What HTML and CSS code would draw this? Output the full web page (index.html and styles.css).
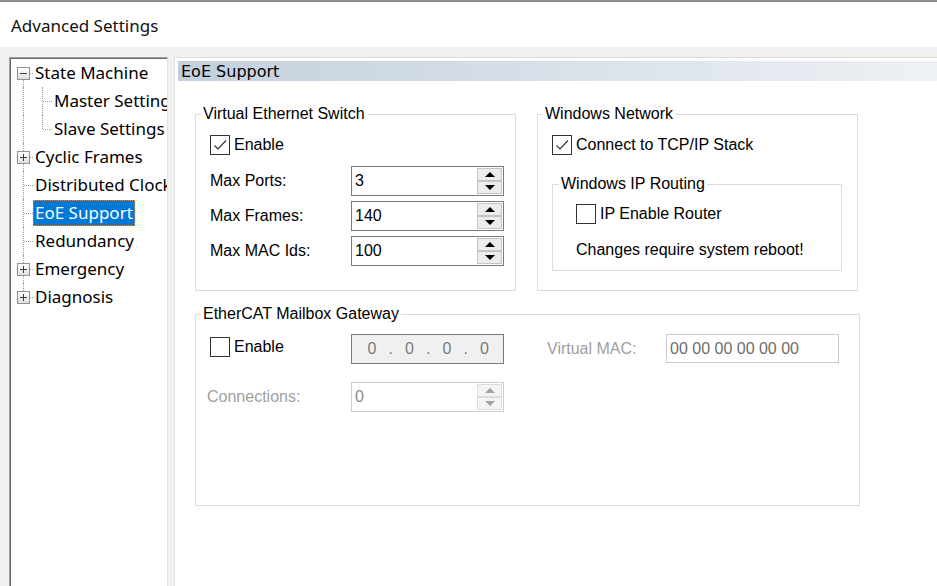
FILE: index.html
```html
<!DOCTYPE html>
<html>
<head>
<meta charset="utf-8">
<title>Advanced Settings</title>
<link rel="stylesheet" href="styles.css">
</head>
<body>
<header class="titlebar">Advanced Settings</header>
<div class="main">
  <nav class="tree">
    <div class="row"><span class="ln first"><i class="exp"></i></span><span class="lbl">State Machine</span></div>
    <div class="row"><span class="ln pass"></span><span class="ln sub"></span><span class="lbl">Master Settings</span></div>
    <div class="row"><span class="ln pass"></span><span class="ln sub last"></span><span class="lbl">Slave Settings</span></div>
    <div class="row"><span class="ln"><i class="exp plus"></i></span><span class="lbl">Cyclic Frames</span></div>
    <div class="row"><span class="ln"></span><span class="lbl">Distributed Clocks</span></div>
    <div class="row"><span class="ln"></span><span class="lbl sel">EoE Support</span></div>
    <div class="row"><span class="ln"></span><span class="lbl">Redundancy</span></div>
    <div class="row"><span class="ln"><i class="exp plus"></i></span><span class="lbl">Emergency</span></div>
    <div class="row"><span class="ln last"><i class="exp plus"></i></span><span class="lbl">Diagnosis</span></div>
  </nav>
  <section class="panel">
    <div class="hdr">EoE Support</div>
    <div class="content">
      <div class="top-row">
        <fieldset class="grp g-half">
          <legend>Virtual Ethernet Switch</legend>
          <div class="gbody">
            <label class="chk"><span class="box"><svg width="18" height="18" viewBox="0 0 18 18"><path d="M3.5 9.5 L7 13 L15 4.5" fill="none" stroke="#333" stroke-width="1.2"/></svg></span>Enable</label>
            <div class="field first-field"><span class="lab">Max Ports:</span><div class="spin"><span class="val">3</span><span class="btns"><span class="sb"><i class="up"></i></span><span class="sb"><i class="dn"></i></span></span></div></div>
            <div class="field"><span class="lab">Max Frames:</span><div class="spin"><span class="val">140</span><span class="btns"><span class="sb"><i class="up"></i></span><span class="sb"><i class="dn"></i></span></span></div></div>
            <div class="field"><span class="lab">Max MAC Ids:</span><div class="spin"><span class="val">100</span><span class="btns"><span class="sb"><i class="up"></i></span><span class="sb"><i class="dn"></i></span></span></div></div>
          </div>
        </fieldset>
        <fieldset class="grp g-half">
          <legend>Windows Network</legend>
          <div class="gbody">
            <label class="chk"><span class="box"><svg width="18" height="18" viewBox="0 0 18 18"><path d="M3.5 9.5 L7 13 L15 4.5" fill="none" stroke="#333" stroke-width="1.2"/></svg></span>Connect to TCP/IP Stack</label>
            <fieldset class="grp g-inner">
              <legend>Windows IP Routing</legend>
              <div class="ibody">
                <label class="chk"><span class="box"></span>IP Enable Router</label>
                <p class="note">Changes require system reboot!</p>
              </div>
            </fieldset>
          </div>
        </fieldset>
      </div>
      <fieldset class="grp g-wide">
        <legend>EtherCAT Mailbox Gateway</legend>
        <div class="gbody">
          <div class="gw-row">
            <label class="chk gw-chk"><span class="box"></span>Enable</label>
            <div class="ipbox"><span class="oct">0</span><span class="dot">.</span><span class="oct">0</span><span class="dot">.</span><span class="oct">0</span><span class="dot">.</span><span class="oct">0</span></div>
            <span class="vmac">Virtual MAC:</span>
            <div class="macbox">00 00 00 00 00 00</div>
          </div>
          <div class="field gw-conn"><span class="lab dis conn">Connections:</span><div class="spin off"><span class="val">0</span><span class="btns"><span class="sb"><i class="up"></i></span><span class="sb"><i class="dn"></i></span></span></div></div>
        </div>
      </fieldset>
    </div>
  </section>
</div>
</body>
</html>
```
FILE: styles.css
```css
* { box-sizing: border-box; }
html, body { margin: 0; }
body {
  width: 937px;
  height: 586px;
  overflow: hidden;
  background: #f0f0f0;
  display: flex;
  flex-direction: column;
  font-family: "Liberation Sans", Arial, sans-serif;
  font-size: 16px;
  color: #000;
}
.titlebar {
  flex: none;
  height: 47px;
  background: #fff;
  border-top: 2px solid #8c8c8c;
  padding: 1px 0 0 11px;
  font-family: "Noto Sans", sans-serif;
  font-size: 17px;
  line-height: 45px;
  color: #111;
}
.main {
  flex: 1;
  display: flex;
  padding: 10px 0 0 9px;
  min-height: 0;
}
.tree {
  flex: none;
  width: 159px;
  background: #fff;
  border-top: 1px solid #a0a0a0;
  border-left: 1px solid #a0a0a0;
  border-right: 1px solid #e3e3e3;
  box-shadow: inset 1px 1px 0 #696969;
  padding: 1px 0 0 1px;
  overflow: hidden;
  font-family: "Noto Sans", sans-serif;
  font-size: 17px;
}
.row {
  display: flex;
  align-items: center;
  height: 28px;
  padding-left: 2px;
  white-space: nowrap;
}
.ln {
  position: relative;
  flex: none;
  width: 20px;
  height: 28px;
}
.ln::before {
  content: "";
  position: absolute;
  left: 10px;
  top: 0;
  bottom: 0;
  border-left: 1px dotted #a0a0a0;
}
.ln::after {
  content: "";
  position: absolute;
  left: 11px;
  right: 0;
  top: 14px;
  border-top: 1px dotted #a0a0a0;
}
.ln.first::before { top: 14px; }
.ln.last::before { bottom: 14px; }
.ln.pass::after { display: none; }
.ln.sub { width: 19px; }
.ln.sub::before { left: 9px; }
.ln.sub::after { left: 10px; }
.exp {
  position: absolute;
  z-index: 1;
  left: 4px;
  top: 8px;
  width: 13px;
  height: 13px;
  border: 1px solid #919191;
  background: linear-gradient(#ffffff, #dedede);
}
.exp::before {
  content: "";
  position: absolute;
  left: 2px;
  top: 5px;
  width: 7px;
  height: 1px;
  background: #3c3c3c;
}
.exp.plus::after {
  content: "";
  position: absolute;
  left: 5px;
  top: 2px;
  width: 1px;
  height: 7px;
  background: #3c3c3c;
}
.lbl {
  padding: 0 2px;
  height: 26px;
  line-height: 26px;
}
.lbl.sel {
  background: #0078d7;
  color: #fff;
  outline: 1px dotted #e08a40;
  outline-offset: -1px;
}
.panel {
  flex: 1;
  margin-left: 6px;
  background: #fff;
  border-top: 1px solid #dadada;
  border-left: 1px solid #e3e3e3;
  padding: 3px 0 0 3px;
}
.hdr {
  height: 20px;
  padding: 1px 0 0 3px;
  background: linear-gradient(to right, #c3d0dd, #eef1f5);
  font-family: "DejaVu Sans", Verdana, sans-serif;
  font-size: 16px;
  line-height: 19px;
}
.content {
  padding: 24px 0 0 17px;
}
.top-row {
  display: grid;
  grid-template-columns: 321px 321px;
  column-gap: 21px;
}
.grp {
  margin: 0;
  padding: 0;
  min-width: 0;
  border: 1px solid #dcdcdc;
}
.grp legend {
  margin-left: 5px;
  padding: 0 2px;
  font-size: 16px;
  line-height: 18px;
}
.g-half { height: 186px; }
.g-inner { width: 290px; height: 96px; margin-top: 20px; }
.g-inner legend { margin-left: 6px; }
.g-wide { width: 665px; height: 201px; margin-top: 14px; }
.gbody { padding: 12px 0 0 14px; }
.ibody { padding: 11px 0 0 23px; }
.chk {
  display: flex;
  align-items: center;
  gap: 4px;
  height: 20px;
  line-height: 20px;
}
.box {
  flex: none;
  width: 20px;
  height: 20px;
  border: 1px solid #333;
  background: #fff;
}
.box svg { display: block; }
.note { margin: 17px 0 0; line-height: 18px; }
.field {
  display: flex;
  align-items: center;
  height: 30px;
  margin-top: 5px;
}
.first-field { margin-top: 11px; }
.lab { flex: none; width: 141px; }
.spin {
  display: flex;
  width: 153px;
  height: 30px;
  border: 1px solid #7a7a7a;
  background: #fff;
}
.spin .val {
  flex: 1;
  padding-left: 3px;
  line-height: 28px;
}
.btns {
  display: flex;
  flex-direction: column;
  width: 26px;
  padding: 1px 1px 1px 0;
}
.sb {
  flex: 1;
  display: flex;
  align-items: center;
  justify-content: center;
  border: 1px solid #c4c4c4;
  background: #ececec;
}
.up, .dn {
  width: 0;
  height: 0;
  border-left: 5px solid transparent;
  border-right: 5px solid transparent;
}
.up { border-bottom: 5px solid #000; }
.dn { border-top: 5px solid #000; }
.spin.off { border-color: #cccccc; }
.spin.off .val { color: #8a8a8a; }
.spin.off .sb { border-color: #dcdcdc; background: #f4f4f4; }
.spin.off .up { border-bottom-color: #a0a0a0; }
.spin.off .dn { border-top-color: #a0a0a0; }
.gw-row {
  display: flex;
  align-items: flex-start;
  height: 30px;
  margin-top: -1px;
}
.gw-chk { width: 141px; margin-top: 3px; }
.ipbox {
  flex: none;
  display: flex;
  width: 153px;
  height: 30px;
  padding-left: 10px;
  border: 1px solid #7a7a7a;
  background: #f0f0f0;
  color: #7a7a7a;
  line-height: 28px;
}
.oct { width: 20px; text-align: center; }
.dot { width: 17.5px; text-align: center; }
.vmac {
  flex: none;
  width: 119px;
  margin-left: 43px;
  line-height: 30px;
  color: #a0a0a0;
}
.macbox {
  flex: none;
  width: 173px;
  height: 29px;
  padding-left: 3px;
  border: 1px solid #cccccc;
  line-height: 27px;
  color: #6d6d6d;
}
.gw-conn { margin-top: 18px; }
.lab.dis { color: #a0a0a0; }
.lab.conn { width: 144px; margin-left: -3px; }
```
